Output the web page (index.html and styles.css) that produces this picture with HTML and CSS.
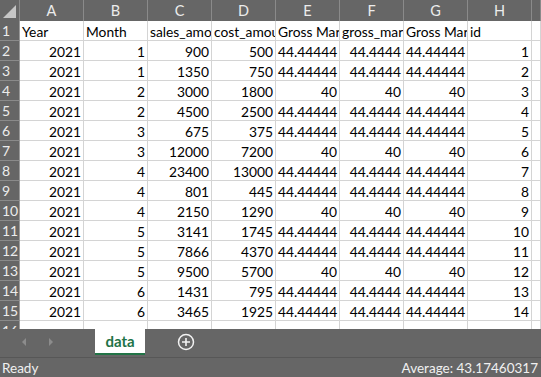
FILE: index.html
```html
<!DOCTYPE html>
<html>
<head>
<meta charset="utf-8">
<link rel="stylesheet" href="styles.css">
</head>
<body>
<div class="app">
  <div class="sheet">
    <div class="corner"><span class="tri"></span></div>
    <div class="ch">A</div><div class="ch">B</div><div class="ch">C</div><div class="ch">D</div><div class="ch">E</div><div class="ch">F</div><div class="ch">G</div><div class="ch">H</div><div class="ch"></div>

    <div class="rh">1</div><div class="c">Year</div><div class="c">Month</div><div class="c">sales_amount</div><div class="c">cost_amount</div><div class="c">Gross Margin</div><div class="c">gross_margin</div><div class="c">Gross Margin</div><div class="c">id</div><div class="c"></div>
    <div class="rh">2</div><div class="c n">2021</div><div class="c n">1</div><div class="c n">900</div><div class="c n">500</div><div class="c n">44.44444</div><div class="c n">44.4444</div><div class="c n">44.44444</div><div class="c n">1</div><div class="c"></div>
    <div class="rh">3</div><div class="c n">2021</div><div class="c n">1</div><div class="c n">1350</div><div class="c n">750</div><div class="c n">44.44444</div><div class="c n">44.4444</div><div class="c n">44.44444</div><div class="c n">2</div><div class="c"></div>
    <div class="rh">4</div><div class="c n">2021</div><div class="c n">2</div><div class="c n">3000</div><div class="c n">1800</div><div class="c n">40</div><div class="c n">40</div><div class="c n">40</div><div class="c n">3</div><div class="c"></div>
    <div class="rh">5</div><div class="c n">2021</div><div class="c n">2</div><div class="c n">4500</div><div class="c n">2500</div><div class="c n">44.44444</div><div class="c n">44.4444</div><div class="c n">44.44444</div><div class="c n">4</div><div class="c"></div>
    <div class="rh">6</div><div class="c n">2021</div><div class="c n">3</div><div class="c n">675</div><div class="c n">375</div><div class="c n">44.44444</div><div class="c n">44.4444</div><div class="c n">44.44444</div><div class="c n">5</div><div class="c"></div>
    <div class="rh">7</div><div class="c n">2021</div><div class="c n">3</div><div class="c n">12000</div><div class="c n">7200</div><div class="c n">40</div><div class="c n">40</div><div class="c n">40</div><div class="c n">6</div><div class="c"></div>
    <div class="rh">8</div><div class="c n">2021</div><div class="c n">4</div><div class="c n">23400</div><div class="c n">13000</div><div class="c n">44.44444</div><div class="c n">44.4444</div><div class="c n">44.44444</div><div class="c n">7</div><div class="c"></div>
    <div class="rh">9</div><div class="c n">2021</div><div class="c n">4</div><div class="c n">801</div><div class="c n">445</div><div class="c n">44.44444</div><div class="c n">44.4444</div><div class="c n">44.44444</div><div class="c n">8</div><div class="c"></div>
    <div class="rh">10</div><div class="c n">2021</div><div class="c n">4</div><div class="c n">2150</div><div class="c n">1290</div><div class="c n">40</div><div class="c n">40</div><div class="c n">40</div><div class="c n">9</div><div class="c"></div>
    <div class="rh">11</div><div class="c n">2021</div><div class="c n">5</div><div class="c n">3141</div><div class="c n">1745</div><div class="c n">44.44444</div><div class="c n">44.4444</div><div class="c n">44.44444</div><div class="c n">10</div><div class="c"></div>
    <div class="rh">12</div><div class="c n">2021</div><div class="c n">5</div><div class="c n">7866</div><div class="c n">4370</div><div class="c n">44.44444</div><div class="c n">44.4444</div><div class="c n">44.44444</div><div class="c n">11</div><div class="c"></div>
    <div class="rh">13</div><div class="c n">2021</div><div class="c n">5</div><div class="c n">9500</div><div class="c n">5700</div><div class="c n">40</div><div class="c n">40</div><div class="c n">40</div><div class="c n">12</div><div class="c"></div>
    <div class="rh">14</div><div class="c n">2021</div><div class="c n">6</div><div class="c n">1431</div><div class="c n">795</div><div class="c n">44.44444</div><div class="c n">44.4444</div><div class="c n">44.44444</div><div class="c n">13</div><div class="c"></div>
    <div class="rh">15</div><div class="c n">2021</div><div class="c n">6</div><div class="c n">3465</div><div class="c n">1925</div><div class="c n">44.44444</div><div class="c n">44.4444</div><div class="c n">44.44444</div><div class="c n">14</div><div class="c"></div>
    <div class="rh">16</div><div class="c"></div><div class="c"></div><div class="c"></div><div class="c"></div><div class="c"></div><div class="c"></div><div class="c"></div><div class="c"></div><div class="c"></div>
  </div>

  <div class="tabbar">
    <div class="nav">
      <svg width="8" height="10" viewBox="0 0 8 10"><path d="M6 1 L2 5 L6 9 Z" fill="#8c8c8c"/></svg>
      <svg width="8" height="10" viewBox="0 0 8 10"><path d="M2 1 L6 5 L2 9 Z" fill="#8c8c8c"/></svg>
    </div>
    <div class="tab">data</div>
    <div class="add">
      <svg width="18" height="18" viewBox="0 0 18 18"><circle cx="9" cy="9" r="7.5" fill="none" stroke="#f2f2f2" stroke-width="1.5"/><path d="M9 5 V13 M5 9 H13" stroke="#f2f2f2" stroke-width="1.6"/></svg>
    </div>
  </div>

  <div class="status">
    <span>Ready</span>
    <span>Average: 43.17460317</span>
  </div>
</div>
</body>
</html>
```

FILE: styles.css
```css
html, body {
  margin: 0;
  padding: 0;
  background: #ffffff;
  overflow: hidden;
}

.app {
  width: 541px;
  height: 377px;
  display: flex;
  flex-direction: column;
  font-family: "Lato", "Liberation Sans", sans-serif;
}

.sheet {
  height: 329px;
  flex: none;
  overflow: hidden;
  display: grid;
  grid-template-columns: 20px repeat(8, 64px) 1fr;
  grid-template-rows: 21px;
  grid-auto-rows: 20px;
  background: #ffffff;
}

.corner {
  background: #666666;
  border-right: 1px solid #8a8a8a;
  position: relative;
}

.tri {
  position: absolute;
  right: 3px;
  bottom: 3px;
  width: 0;
  height: 0;
  border-left: 13px solid transparent;
  border-bottom: 13px solid #c6c6c6;
}

.ch {
  background: #666666;
  color: #ececec;
  border-right: 1px solid #8a8a8a;
  font-size: 14.5px;
  text-align: center;
  line-height: 21px;
}

.rh {
  background: #666666;
  color: #ececec;
  border-right: 1px solid #9a9a9a;
  border-bottom: 1px solid #8a8a8a;
  font-size: 14px;
  padding-left: 2px;
  line-height: 20px;
  box-sizing: border-box;
  overflow: hidden;
  white-space: nowrap;
}

.c {
  box-sizing: border-box;
  border-right: 1px solid #d4d4d4;
  border-bottom: 1px solid #d4d4d4;
  padding: 0 2px;
  font-size: 13.8px;
  line-height: 21px;
  color: #000000;
  overflow: hidden;
  white-space: nowrap;
}

.n {
  text-align: right;
}

.tabbar {
  height: 28px;
  flex: none;
  background: #666666;
  display: flex;
  align-items: flex-start;
}

.nav {
  width: 95px;
  height: 26px;
  display: flex;
  align-items: center;
  gap: 19px;
  padding-left: 20px;
  box-sizing: border-box;
}

.tab {
  width: 50px;
  height: 24px;
  background: #ffffff;
  border-bottom: 2px solid #217346;
  color: #217346;
  font-weight: bold;
  font-size: 15px;
  text-align: center;
  line-height: 25px;
}

.add {
  margin-left: 32px;
  height: 26px;
  display: flex;
  align-items: center;
}

.status {
  height: 20px;
  flex: none;
  background: #666666;
  border-top: 1px solid #575757;
  box-sizing: border-box;
  display: flex;
  justify-content: space-between;
  align-items: center;
  padding: 0 3px 0 2px;
  color: #f0f0f0;
  font-size: 13.5px;
}
```
